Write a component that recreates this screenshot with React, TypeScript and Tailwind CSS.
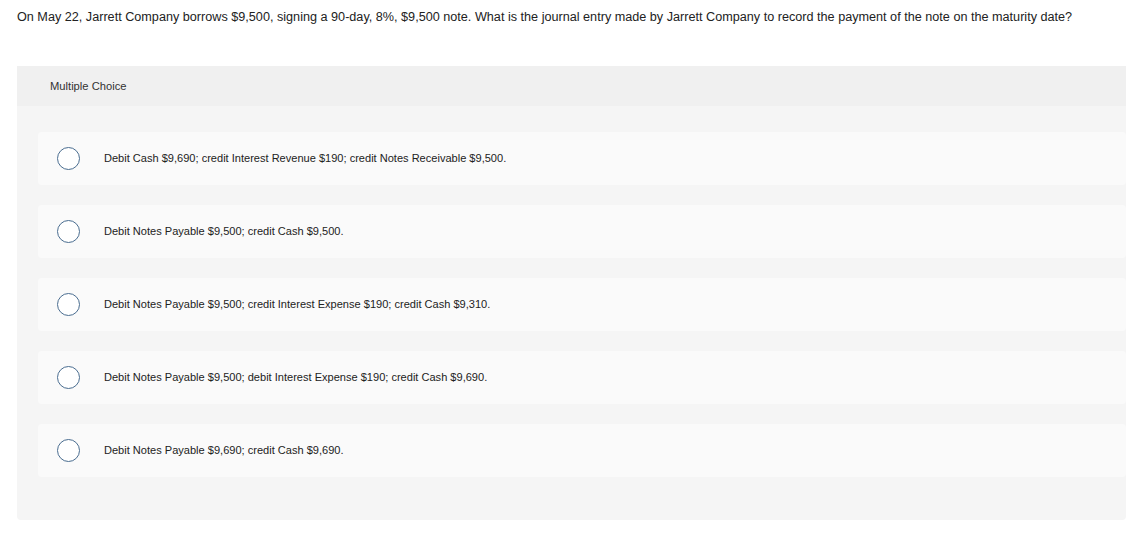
const options = [
  "Debit Cash $9,690; credit Interest Revenue $190; credit Notes Receivable $9,500.",
  "Debit Notes Payable $9,500; credit Cash $9,500.",
  "Debit Notes Payable $9,500; credit Interest Expense $190; credit Cash $9,310.",
  "Debit Notes Payable $9,500; debit Interest Expense $190; credit Cash $9,690.",
  "Debit Notes Payable $9,690; credit Cash $9,690.",
];

export default function App() {
  return (
    <div className="bg-white min-h-[538px] font-['Liberation_Sans',Arial,sans-serif] text-[#222]">
      <p className="pl-[17px] pt-[9px] text-[12.65px] leading-[17px] whitespace-nowrap">
        On May 22, Jarrett Company borrows $9,500, signing a 90-day, 8%, $9,500 note. What is the
        journal entry made by Jarrett Company to record the payment of the note on the maturity date?
      </p>
      <div className="ml-[17px] mt-[40px] bg-[#f5f5f5] rounded-sm pb-[43px]">
        <div className="bg-[#f0f0f0] h-[40px] flex items-center pl-[33px] text-[11.2px] text-[#333]">
          Multiple Choice
        </div>
        <div className="flex flex-col gap-[20px] pt-[26px] pl-[21px]">
          {options.map((o) => (
            <label
              key={o}
              className="h-[53px] bg-[#fafafa] rounded-sm flex items-center cursor-pointer"
            >
              <span className="ml-[19px] w-[23px] h-[23px] rounded-full border-[1.5px] border-[#4a6d90] bg-white shrink-0" />
              <span className="ml-[24px] text-[11.05px] text-[#222]">{o}</span>
            </label>
          ))}
        </div>
      </div>
    </div>
  );
}
